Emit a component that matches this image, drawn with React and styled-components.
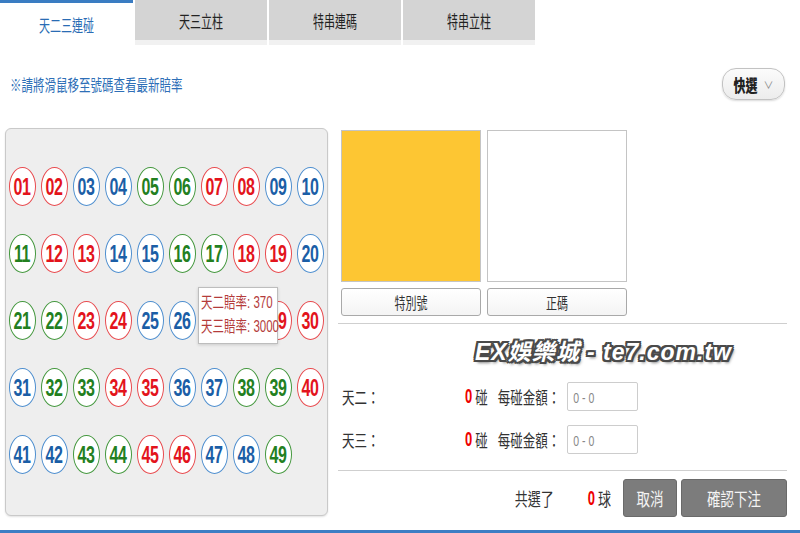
import React from 'react';
import styled, { createGlobalStyle, css } from 'styled-components';

const GlobalStyle = createGlobalStyle`
  html, body {
    margin: 0;
    padding: 0;
    background: #fff;
    overflow: hidden;
  }
  body {
    font-family: "Liberation Sans", "Noto Sans CJK TC", sans-serif;
  }
`;

// the screenshot is stretched vertically, so text is drawn taller than wide
const tall = (k = 1.4) => css`
  display: inline-block;
  transform: scaleY(${k});
`;

const Page = styled.div`
  width: 800px;
  height: 533px;
  display: flex;
  flex-direction: column;
  position: relative;
`;

const TabBar = styled.div`
  display: flex;
  gap: 2px;
  height: 45px;
`;

const Tab = styled.div`
  box-sizing: border-box;
  width: ${p => (p.active ? 133 : 132)}px;
  display: flex;
  justify-content: center;
  align-items: ${p => (p.active ? 'flex-start' : 'center')};
  font-size: 11px;
  ${p =>
    p.active
      ? css`
          height: 45px;
          background: #fff;
          border-top: 3px solid #3a7cc2;
          padding-top: 13px;
          color: #2a6cb4;
        `
      : css`
          height: 45px;
          background: #d4d4d4;
          border-bottom: 5px solid #f1f1f1;
          color: #222;
        `}
  span {
    ${tall(1.5)}
  }
`;

const Toolbar = styled.div`
  height: 78px;
  display: flex;
  align-items: center;
  justify-content: space-between;
  padding: 0 15px 0 10px;
`;

const Hint = styled.span`
  font-size: 11.5px;
  color: #2e6fb7;
  ${tall(1.4)}
`;

const QuickPick = styled.button`
  width: 63px;
  height: 32px;
  border: 1px solid #c2c2c2;
  border-radius: 14px;
  background: linear-gradient(#fbfbfb, #ececec);
  box-shadow: 0 1px 2px rgba(0, 0, 0, 0.15);
  display: flex;
  align-items: center;
  justify-content: center;
  gap: 6px;
  padding: 0;
  font-family: inherit;
  font-size: 12px;
  font-weight: bold;
  color: #222;
  b {
    ${tall(1.4)}
  }
  i {
    font-style: normal;
    font-weight: normal;
    color: #888;
    font-size: 10px;
  }
`;

const Main = styled.div`
  display: flex;
  gap: 10px;
  padding-left: 5px;
  margin-top: 5px;
`;

const BallPanel = styled.div`
  position: relative;
  box-sizing: border-box;
  width: 323px;
  height: 388px;
  background: #eeeeee;
  border: 1px solid #c9c9c9;
  border-radius: 6px;
  box-shadow: 0 1px 2px rgba(0, 0, 0, 0.12);
  display: grid;
  grid-template-columns: repeat(10, 32px);
  grid-auto-rows: 67px;
  padding-top: 24px;
  align-content: start;
`;

const palette = {
  red: { text: '#e3141c', ring: '#e84b4f' },
  blue: { text: '#1b5ea6', ring: '#4f8fcf' },
  green: { text: '#23801f', ring: '#45983f' },
};

const Ball = styled.div`
  justify-self: center;
  align-self: center;
  box-sizing: border-box;
  width: 27px;
  height: 39px;
  border-radius: 50%;
  border: 1.5px solid ${p => palette[p.tone].ring};
  background: #fff;
  color: ${p => palette[p.tone].text};
  display: flex;
  align-items: center;
  justify-content: center;
  font-size: 16px;
  font-weight: bold;
  span {
    ${tall(1.5)}
    letter-spacing: -0.5px;
  }
`;

const Tooltip = styled.div`
  position: absolute;
  left: 192px;
  top: 158px;
  width: 80px;
  height: 57px;
  box-sizing: border-box;
  background: #fff;
  border: 1px solid #bdbdbd;
  box-shadow: 0 1px 3px rgba(0, 0, 0, 0.15);
  padding: 5px 0 0 2px;
  display: flex;
  flex-direction: column;
  gap: 8px;
  color: #b43b3b;
  font-size: 11.5px;
  span {
    ${tall(1.4)}
    transform-origin: left center;
    white-space: nowrap;
  }
`;

const Side = styled.div`
  width: 449px;
  display: flex;
  flex-direction: column;
`;

const Cards = styled.div`
  display: flex;
  gap: 6px;
  padding: 2px 0 0 3px;
`;

const CardCol = styled.div`
  display: flex;
  flex-direction: column;
  gap: 6px;
`;

const Swatch = styled.div`
  width: 140px;
  height: 152px;
  box-sizing: border-box;
  border: 1px solid #c4c4c4;
  background: ${p => (p.filled ? '#fdc633' : '#fff')};
`;

const PickButton = styled.div`
  width: 140px;
  height: 28px;
  box-sizing: border-box;
  border: 1px solid #a9a9a9;
  border-radius: 3px;
  background: linear-gradient(#ffffff, #f4f4f4);
  display: flex;
  align-items: center;
  justify-content: center;
  font-size: 11px;
  color: #333;
  span {
    ${tall(1.4)}
  }
`;

const Divider = styled.div`
  height: 1px;
  background: #cfcfcf;
  margin-top: ${p => p.top || 0}px;
`;

const Watermark = styled.div`
  height: 58px;
  display: flex;
  align-items: center;
  padding: 0 0 6px 137px;
  box-sizing: border-box;
  font-size: 23px;
  font-weight: bold;
  font-style: italic;
  letter-spacing: 1px;
  color: #fff;
  white-space: nowrap;
  text-shadow: -2px -2px 0 #4a4a4a, 2px -2px 0 #4a4a4a, -2px 2px 0 #4a4a4a,
    2px 2px 0 #4a4a4a, 0 -2px 0 #4a4a4a, 0 2px 0 #4a4a4a, -2px 0 0 #4a4a4a,
    2px 0 0 #4a4a4a, 2px 3px 3px rgba(0, 0, 0, 0.5);
`;

const BetRows = styled.div`
  display: flex;
  flex-direction: column;
  gap: 14px;
`;

const BetRow = styled.div`
  height: 29px;
  display: flex;
  align-items: center;
  padding-left: 4px;
  font-size: 12.5px;
  color: #333;
`;

const RowLabel = styled.span`
  width: 123px;
  span {
    ${tall(1.4)}
  }
`;

const Count = styled.span`
  color: #e00;
  font-weight: bold;
  font-size: 13px;
  margin-right: 3px;
  ${tall(1.5)}
`;

const Unit = styled.span`
  ${tall(1.4)}
  margin-right: ${p => p.gap || 0}px;
`;

const AmountInput = styled.div`
  width: 71px;
  height: 29px;
  box-sizing: border-box;
  border: 1px solid #cdcdcd;
  border-radius: 2px;
  background: #fff;
  display: flex;
  align-items: center;
  padding-left: 5px;
  font-size: 10.5px;
  color: #888;
  margin-left: 7px;
  span {
    ${tall(1.4)}
  }
`;

const Footer = styled.div`
  display: flex;
  justify-content: flex-end;
  align-items: center;
  margin-top: 8px;
  font-size: 13px;
  color: #333;
`;

const ActionButton = styled.div`
  height: 38px;
  width: ${p => p.w}px;
  box-sizing: border-box;
  background: #7c7c7c;
  border: 1px solid #6a6a6a;
  border-radius: 3px;
  color: #f4f4f4;
  font-size: 13.5px;
  display: flex;
  align-items: center;
  justify-content: center;
  margin-left: ${p => p.gap}px;
  span {
    ${tall(1.35)}
  }
`;

const BottomLine = styled.div`
  margin-top: auto;
  height: 3px;
  background: #3d7ec4;
`;

const red = [1, 2, 7, 8, 12, 13, 18, 19, 23, 24, 29, 30, 34, 35, 40, 45, 46];
const blue = [3, 4, 9, 10, 14, 15, 20, 25, 26, 31, 36, 37, 41, 42, 47, 48];
const toneOf = n => (red.includes(n) ? 'red' : blue.includes(n) ? 'blue' : 'green');

const balls = Array.from({ length: 49 }, (_, i) => i + 1);

export default function App() {
  return (
    <Page>
      <GlobalStyle />
      <TabBar>
        <Tab active><span>天二三連碰</span></Tab>
        <Tab><span>天三立柱</span></Tab>
        <Tab><span>特串連碼</span></Tab>
        <Tab><span>特串立柱</span></Tab>
      </TabBar>

      <Toolbar>
        <Hint>※請將滑鼠移至號碼查看最新賠率</Hint>
        <QuickPick>
          <b>快選</b>
          <i>∨</i>
        </QuickPick>
      </Toolbar>

      <Main>
        <BallPanel>
          {balls.map(n => (
            <Ball key={n} tone={toneOf(n)}>
              <span>{String(n).padStart(2, '0')}</span>
            </Ball>
          ))}
          <Tooltip>
            <span>天二賠率: 370</span>
            <span>天三賠率: 3000</span>
          </Tooltip>
        </BallPanel>

        <Side>
          <Cards>
            <CardCol>
              <Swatch filled />
              <PickButton><span>特別號</span></PickButton>
            </CardCol>
            <CardCol>
              <Swatch />
              <PickButton><span>正碼</span></PickButton>
            </CardCol>
          </Cards>
          <Divider top={7} />
          <Watermark>EX娛樂城 - te7.com.tw</Watermark>
          <BetRows>
            <BetRow>
              <RowLabel><span>天二：</span></RowLabel>
              <Count>0</Count>
              <Unit gap={10}>碰</Unit>
              <Unit>每碰金額：</Unit>
              <AmountInput><span>0 - 0</span></AmountInput>
            </BetRow>
            <BetRow>
              <RowLabel><span>天三：</span></RowLabel>
              <Count>0</Count>
              <Unit gap={10}>碰</Unit>
              <Unit>每碰金額：</Unit>
              <AmountInput><span>0 - 0</span></AmountInput>
            </BetRow>
          </BetRows>
          <Divider top={16} />
          <Footer>
            <Unit gap={34}>共選了</Unit>
            <Count>0</Count>
            <Unit>球</Unit>
            <ActionButton w={54} gap={12}><span>取消</span></ActionButton>
            <ActionButton w={106} gap={4}><span>確認下注</span></ActionButton>
          </Footer>
        </Side>
      </Main>
      <BottomLine />
    </Page>
  );
}
